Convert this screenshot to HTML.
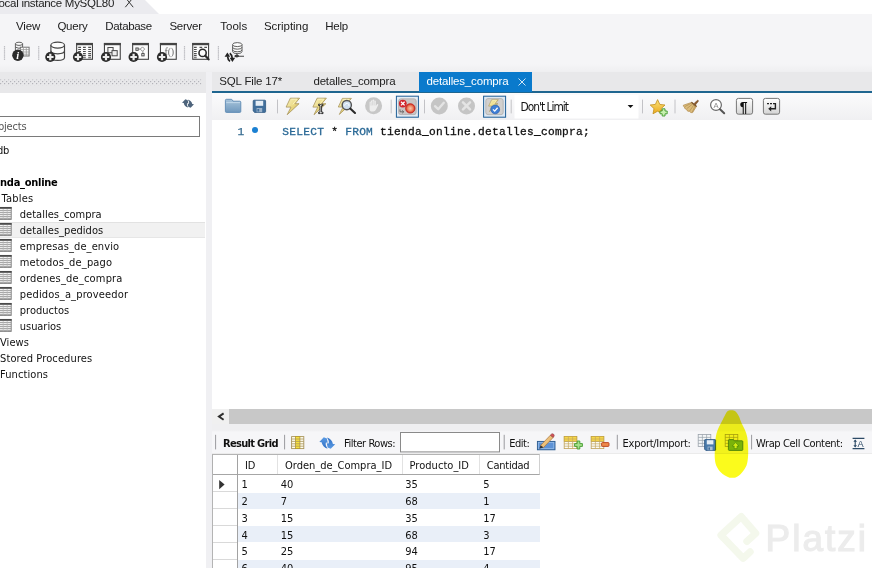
<!DOCTYPE html>
<html><head><meta charset="utf-8"><title>MySQL Workbench</title>
<style>
html,body{margin:0;padding:0;}
body{width:872px;height:568px;overflow:hidden;position:relative;background:#fff;font-family:"Liberation Sans",sans-serif;font-size:12px;color:#1a1a1a;}
.abs{position:absolute;}
.t{position:absolute;white-space:pre;line-height:1;}
.s{font-family:"Liberation Sans",sans-serif;}
.h{font-family:"DejaVu Sans Condensed","DejaVu Sans","Liberation Sans",sans-serif;}
.m{font-family:"Liberation Mono",monospace;}
svg{position:absolute;overflow:visible;}
</style></head><body>
<!-- top tab -->
<svg style="left:0;top:0" width="170" height="14"><polygon points="0,0 145,0 159,14 0,14" fill="#ebebef"/></svg>
<svg style="left:124.5px;top:-2.7px" width="9" height="11"><path d="M0.3 0.5 L8.2 10.2 M8.2 0.5 L0.3 10.2" stroke="#333" stroke-width="1" fill="none"/></svg>

<div class="abs" style="left:0;top:13.5px;width:872px;height:59px;background:linear-gradient(#f5f5f7 0,#f5f5f7 50px,#eeeef0 59px);"></div>
<div class="abs" style="left:0;top:72px;width:872px;height:21px;background:#e8e8ea;"></div>

<svg style="left:0;top:0" width="260" height="70" viewBox="0 0 260 70" fill="none"><rect x="3.9" y="46.3" width="1.2" height="1.1" fill="#a8a8ae"/><rect x="3.9" y="48.3" width="1.2" height="1.1" fill="#a8a8ae"/><rect x="3.9" y="50.4" width="1.2" height="1.1" fill="#a8a8ae"/><rect x="3.9" y="52.4" width="1.2" height="1.1" fill="#a8a8ae"/><rect x="3.9" y="54.5" width="1.2" height="1.1" fill="#a8a8ae"/><rect x="3.9" y="56.5" width="1.2" height="1.1" fill="#a8a8ae"/><rect x="3.9" y="58.6" width="1.2" height="1.1" fill="#a8a8ae"/><rect x="38.1" y="46.3" width="1.2" height="1.1" fill="#a8a8ae"/><rect x="38.1" y="48.3" width="1.2" height="1.1" fill="#a8a8ae"/><rect x="38.1" y="50.4" width="1.2" height="1.1" fill="#a8a8ae"/><rect x="38.1" y="52.4" width="1.2" height="1.1" fill="#a8a8ae"/><rect x="38.1" y="54.5" width="1.2" height="1.1" fill="#a8a8ae"/><rect x="38.1" y="56.5" width="1.2" height="1.1" fill="#a8a8ae"/><rect x="38.1" y="58.6" width="1.2" height="1.1" fill="#a8a8ae"/><rect x="183.9" y="46.3" width="1.2" height="1.1" fill="#a8a8ae"/><rect x="183.9" y="48.3" width="1.2" height="1.1" fill="#a8a8ae"/><rect x="183.9" y="50.4" width="1.2" height="1.1" fill="#a8a8ae"/><rect x="183.9" y="52.4" width="1.2" height="1.1" fill="#a8a8ae"/><rect x="183.9" y="54.5" width="1.2" height="1.1" fill="#a8a8ae"/><rect x="183.9" y="56.5" width="1.2" height="1.1" fill="#a8a8ae"/><rect x="183.9" y="58.6" width="1.2" height="1.1" fill="#a8a8ae"/><rect x="217.8" y="46.3" width="1.2" height="1.1" fill="#a8a8ae"/><rect x="217.8" y="48.3" width="1.2" height="1.1" fill="#a8a8ae"/><rect x="217.8" y="50.4" width="1.2" height="1.1" fill="#a8a8ae"/><rect x="217.8" y="52.4" width="1.2" height="1.1" fill="#a8a8ae"/><rect x="217.8" y="54.5" width="1.2" height="1.1" fill="#a8a8ae"/><rect x="217.8" y="56.5" width="1.2" height="1.1" fill="#a8a8ae"/><rect x="217.8" y="58.6" width="1.2" height="1.1" fill="#a8a8ae"/><g stroke="#5c5c5c" stroke-width="0.95"><ellipse cx="19" cy="43.8" rx="3.6" ry="1.6" fill="#fafafa"/><path d="M15.4 43.8V51M22.6 43.8V47.5M15.4 47.2Q19 49.4 22.6 47.2" /></g><rect x="20.3" y="47.2" width="8.8" height="8.8" fill="#fbfbfb" stroke="#6c6c6c" stroke-width="0.95"/><path d="M20.3 49.6H29M20.3 52H29M20.3 54.2H29M23.4 47.2V56M26.3 47.2V56" stroke="#9a9a9a" stroke-width="0.8"/><circle cx="17.9" cy="55.3" r="5.7" fill="#2b2b2b"/><text x="16.3" y="59" font-family="Liberation Serif,serif" font-style="italic" font-weight="700" font-size="10.5" fill="#fff">i</text><g stroke="#444" stroke-width="1.15"><path d="M50.9 45.1V57.4Q50.9 60.3 57.7 60.3Q64.5 60.3 64.5 57.4V45.1" fill="#fbfbfb"/><ellipse cx="57.7" cy="45.1" rx="6.8" ry="3" fill="#fdfdfd"/><path d="M50.9 50.8Q50.9 53.8 57.7 53.8Q64.5 53.8 64.5 50.8"/></g><circle cx="50.3" cy="57" r="5.1" fill="#2b2b2b"/><path d="M47.0 57H53.599999999999994M50.3 53.7V60.3" stroke="#ececec" stroke-width="2.2"/><rect x="76.64999999999999" y="43.6" width="15.8" height="15.7" fill="#fcfcfc" stroke="#444" stroke-width="1.1"/><rect x="76.1" y="42.9" width="16.9" height="2.3" fill="#444"/><path d="M78.2 47.40H81M83 47.40H85.8M88.2 47.40H91M78.2 49.46H81M83 49.46H85.8M88.2 49.46H91M78.2 51.52H81M83 51.52H85.8M88.2 51.52H91M78.2 53.58H81M83 53.58H85.8M88.2 53.58H91M78.2 55.64H81M83 55.64H85.8M88.2 55.64H91M78.2 57.70H81M83 57.70H85.8M88.2 57.70H91" stroke="#505050" stroke-width="1.1"/><circle cx="78" cy="57" r="5.1" fill="#2b2b2b"/><path d="M74.7 57H81.3M78 53.7V60.3" stroke="#ececec" stroke-width="2.2"/><rect x="104.45" y="43.6" width="15.8" height="15.7" fill="#fcfcfc" stroke="#444" stroke-width="1.1"/><rect x="103.9" y="42.9" width="16.9" height="2.3" fill="#444"/><rect x="107.9" y="47.5" width="5.2" height="5.2" fill="#f6f6f6" stroke="#4a4a4a" stroke-width="1"/><rect x="112" y="50.6" width="5.2" height="5.2" fill="#f0f0f0" stroke="#4a4a4a" stroke-width="1"/><circle cx="106" cy="57" r="5.1" fill="#2b2b2b"/><path d="M102.7 57H109.3M106 53.7V60.3" stroke="#ececec" stroke-width="2.2"/><rect x="132.65" y="43.6" width="15.8" height="15.7" fill="#fcfcfc" stroke="#444" stroke-width="1.1"/><rect x="132.1" y="42.9" width="16.9" height="2.3" fill="#444"/><rect x="135.9" y="48" width="2.3" height="2.3" stroke="#3a3a3a" stroke-width="0.9" fill="#fff"/><path d="M142.5 46.9L144.7 49.1L142.5 51.3L140.3 49.1Z" stroke="#777" stroke-width="0.8" fill="#fff"/><rect x="141.8" y="53.6" width="2.3" height="2.3" stroke="#3a3a3a" stroke-width="0.9" fill="#fff"/><path d="M138.6 49.1H140.3M142.9 51.3V53.2" stroke="#666" stroke-width="0.8"/><circle cx="133.6" cy="57" r="5.1" fill="#2b2b2b"/><path d="M130.29999999999998 57H136.9M133.6 53.7V60.3" stroke="#ececec" stroke-width="2.2"/><rect x="160.45000000000002" y="43.6" width="15.8" height="15.7" fill="#fcfcfc" stroke="#444" stroke-width="1.1"/><rect x="159.9" y="42.9" width="16.9" height="2.3" fill="#444"/><text x="164.6" y="55.4" font-family="Liberation Serif,serif" font-size="10" fill="#6a6a6a" letter-spacing="-0.2">f()</text><circle cx="162" cy="57" r="5.1" fill="#2b2b2b"/><path d="M158.7 57H165.3M162 53.7V60.3" stroke="#ececec" stroke-width="2.2"/><rect x="192.75" y="43.6" width="15.8" height="15.7" fill="#fcfcfc" stroke="#444" stroke-width="1.1"/><rect x="192.2" y="42.9" width="16.9" height="2.3" fill="#444"/><path d="M194 47.4H196.7M199.5 47.4H202.2M204.3 47.4H207M194 49.46H196.7M194 51.52H196.7M194 53.58H196.7M194 55.64H196.7M194 57.70H196.7" stroke="#505050" stroke-width="1.1"/><circle cx="202.6" cy="52.9" r="3.6" fill="#fcfcfc" stroke="#2b2b2b" stroke-width="1.6"/><path d="M205.4 55.7L208.6 59.4" stroke="#2b2b2b" stroke-width="2.2" stroke-linecap="round"/><g stroke="#5a5a5a" stroke-width="0.95"><path d="M232.6 44.6V51.6Q232.6 53.6 237.3 53.6Q242 53.6 242 51.6V44.6" fill="#fbfbfb"/><ellipse cx="237.3" cy="44.6" rx="4.7" ry="2" fill="#fdfdfd"/><path d="M232.6 47.2Q232.6 49.2 237.3 49.2Q242 49.2 242 47.2M232.6 49.8Q232.6 51.8 237.3 51.8Q242 51.8 242 49.8"/></g><path d="M237 53.6V56M234.5 56.2H244" stroke="#444" stroke-width="1.1"/><ellipse cx="236.8" cy="56.1" rx="2.2" ry="1.3" fill="#3a3a3a"/><path d="M227.4 52.6L224.6 56.8H230.2Z" fill="#222"/><path d="M227.6 56.4Q227.8 59.8 230 61.4" stroke="#222" stroke-width="1.7"/><path d="M232.4 62L229.6 57.8H235.2Z" fill="#222"/><path d="M232.2 58.2Q232 54.8 229.8 53.2" stroke="#222" stroke-width="1.7"/></svg>

<!-- sidebar -->
<div class="abs" style="left:0;top:93px;width:205.5px;height:475px;background:#fff;"></div>
<div class="abs" style="left:205.5px;top:72px;width:6.5px;height:496px;background:#f0f0f3;"></div>
<svg style="left:0;top:79px" width="202" height="7"><defs><pattern id="dots" x="0" y="0" width="4" height="4" patternUnits="userSpaceOnUse"><rect x="0" y="0" width="1.2" height="1.2" fill="#b4b4ba"/><rect x="2" y="2" width="1.2" height="1.2" fill="#b4b4ba"/></pattern></defs><rect x="0" y="0.5" width="201.5" height="5.6" fill="url(#dots)"/></svg>
<svg style="left:182.2px;top:98.9px" width="12" height="9" viewBox="0 0 11.7 8.2"><path id="crs" d="M3.3 0L0 3.3L1.7 3.5Q2.3 7 6.1 8.1Q4.1 5.6 4.9 3.8L6.2 3.9L5.6 0.9Z" fill="#4e647c"/><path d="M3.3 0L0 3.3L1.7 3.5Q2.3 7 6.1 8.1Q4.1 5.6 4.9 3.8L6.2 3.9L5.6 0.9Z" fill="#4e647c" transform="rotate(180 5.85 4.1)"/></svg>
<div class="abs" style="left:-2px;top:116px;width:201.8px;height:21px;border:1px solid #7a7a7a;background:#fff;box-sizing:border-box;"></div>
<div class="abs" style="left:0;top:222px;width:204.5px;height:15.5px;background:#f1f1f1;border-top:1px solid #e2e2e2;border-bottom:1px solid #e6e6e6;box-sizing:border-box;"></div>
<svg style="left:-1px;top:206.6px" width="13" height="13" viewBox="0 0 13 13"><rect x="0" y="0.4" width="12.2" height="12" fill="#f4f4f4" stroke="#7c7c7c" stroke-width="0.9"/><rect x="-0.4" y="0" width="13" height="1.8" fill="#4a4a4a"/><path d="M0 3.6H12.2M0 5.6H12.2M0 7.6H12.2M0 9.6H12.2M0 11.4H12.2" stroke="#969696" stroke-width="0.9"/><path d="M4.2 2V12.4M8.2 2V12.4" stroke="#b4b4b4" stroke-width="0.7"/></svg>
<svg style="left:-1px;top:222.6px" width="13" height="13" viewBox="0 0 13 13"><rect x="0" y="0.4" width="12.2" height="12" fill="#f4f4f4" stroke="#7c7c7c" stroke-width="0.9"/><rect x="-0.4" y="0" width="13" height="1.8" fill="#4a4a4a"/><path d="M0 3.6H12.2M0 5.6H12.2M0 7.6H12.2M0 9.6H12.2M0 11.4H12.2" stroke="#969696" stroke-width="0.9"/><path d="M4.2 2V12.4M8.2 2V12.4" stroke="#b4b4b4" stroke-width="0.7"/></svg>
<svg style="left:-1px;top:238.6px" width="13" height="13" viewBox="0 0 13 13"><rect x="0" y="0.4" width="12.2" height="12" fill="#f4f4f4" stroke="#7c7c7c" stroke-width="0.9"/><rect x="-0.4" y="0" width="13" height="1.8" fill="#4a4a4a"/><path d="M0 3.6H12.2M0 5.6H12.2M0 7.6H12.2M0 9.6H12.2M0 11.4H12.2" stroke="#969696" stroke-width="0.9"/><path d="M4.2 2V12.4M8.2 2V12.4" stroke="#b4b4b4" stroke-width="0.7"/></svg>
<svg style="left:-1px;top:254.6px" width="13" height="13" viewBox="0 0 13 13"><rect x="0" y="0.4" width="12.2" height="12" fill="#f4f4f4" stroke="#7c7c7c" stroke-width="0.9"/><rect x="-0.4" y="0" width="13" height="1.8" fill="#4a4a4a"/><path d="M0 3.6H12.2M0 5.6H12.2M0 7.6H12.2M0 9.6H12.2M0 11.4H12.2" stroke="#969696" stroke-width="0.9"/><path d="M4.2 2V12.4M8.2 2V12.4" stroke="#b4b4b4" stroke-width="0.7"/></svg>
<svg style="left:-1px;top:270.6px" width="13" height="13" viewBox="0 0 13 13"><rect x="0" y="0.4" width="12.2" height="12" fill="#f4f4f4" stroke="#7c7c7c" stroke-width="0.9"/><rect x="-0.4" y="0" width="13" height="1.8" fill="#4a4a4a"/><path d="M0 3.6H12.2M0 5.6H12.2M0 7.6H12.2M0 9.6H12.2M0 11.4H12.2" stroke="#969696" stroke-width="0.9"/><path d="M4.2 2V12.4M8.2 2V12.4" stroke="#b4b4b4" stroke-width="0.7"/></svg>
<svg style="left:-1px;top:286.6px" width="13" height="13" viewBox="0 0 13 13"><rect x="0" y="0.4" width="12.2" height="12" fill="#f4f4f4" stroke="#7c7c7c" stroke-width="0.9"/><rect x="-0.4" y="0" width="13" height="1.8" fill="#4a4a4a"/><path d="M0 3.6H12.2M0 5.6H12.2M0 7.6H12.2M0 9.6H12.2M0 11.4H12.2" stroke="#969696" stroke-width="0.9"/><path d="M4.2 2V12.4M8.2 2V12.4" stroke="#b4b4b4" stroke-width="0.7"/></svg>
<svg style="left:-1px;top:302.6px" width="13" height="13" viewBox="0 0 13 13"><rect x="0" y="0.4" width="12.2" height="12" fill="#f4f4f4" stroke="#7c7c7c" stroke-width="0.9"/><rect x="-0.4" y="0" width="13" height="1.8" fill="#4a4a4a"/><path d="M0 3.6H12.2M0 5.6H12.2M0 7.6H12.2M0 9.6H12.2M0 11.4H12.2" stroke="#969696" stroke-width="0.9"/><path d="M4.2 2V12.4M8.2 2V12.4" stroke="#b4b4b4" stroke-width="0.7"/></svg>
<svg style="left:-1px;top:318.6px" width="13" height="13" viewBox="0 0 13 13"><rect x="0" y="0.4" width="12.2" height="12" fill="#f4f4f4" stroke="#7c7c7c" stroke-width="0.9"/><rect x="-0.4" y="0" width="13" height="1.8" fill="#4a4a4a"/><path d="M0 3.6H12.2M0 5.6H12.2M0 7.6H12.2M0 9.6H12.2M0 11.4H12.2" stroke="#969696" stroke-width="0.9"/><path d="M4.2 2V12.4M8.2 2V12.4" stroke="#b4b4b4" stroke-width="0.7"/></svg>

<!-- editor tabs -->
<div class="abs" style="left:212px;top:91.3px;width:660px;height:1.9px;background:#1f6690;"></div>
<div class="abs" style="left:419px;top:72.3px;width:112.7px;height:19.6px;background:#0a7acc;"></div>
<svg style="left:517.5px;top:77.5px" width="8" height="8"><path d="M0.5 0.5 L7.5 7.5 M7.5 0.5 L0.5 7.5" stroke="#cfe6f7" stroke-width="1" fill="none"/></svg>

<!-- editor toolbar -->
<div class="abs" style="left:212px;top:93.2px;width:660px;height:27px;background:linear-gradient(#fbfbfc,#f0f0f2);"></div>
<svg style="left:0;top:0" width="872" height="125" viewBox="0 0 872 125" fill="none"><defs><linearGradient id="gb" x1="0" y1="0" x2="1" y2="1"><stop offset="0" stop-color="#faf4c4"/><stop offset="0.5" stop-color="#ead882"/><stop offset="1" stop-color="#c4a84e"/></linearGradient><linearGradient id="gf" x1="0" y1="0" x2="0" y2="1"><stop offset="0" stop-color="#a9c5dc"/><stop offset="1" stop-color="#6f98bd"/></linearGradient><linearGradient id="gbtn" x1="0" y1="0" x2="0" y2="1"><stop offset="0" stop-color="#ffffff"/><stop offset="1" stop-color="#d4d4d4"/></linearGradient><linearGradient id="gstar" x1="0" y1="0" x2="0" y2="1"><stop offset="0" stop-color="#fbe27a"/><stop offset="1" stop-color="#e9a91c"/></linearGradient><radialGradient id="gred" cx="0.5" cy="0.5" r="0.5"><stop offset="0" stop-color="#f8c8b0"/><stop offset="0.55" stop-color="#ee8a66"/><stop offset="1" stop-color="#d4281c"/></radialGradient></defs><rect x="514.5" y="95" width="124" height="23.5" fill="#fff"/><path d="M225.4 100.3Q225.4 99.3 226.4 99.3H231.2Q232 99.3 232.4 100L233 101.2H239.8Q240.8 101.2 240.8 102.2V111.4Q240.8 112.4 239.8 112.4H226.4Q225.4 112.4 225.4 111.4Z" fill="url(#gf)" stroke="#5d8ab3" stroke-width="0.9"/><path d="M226.2 102.6H240" stroke="#c4daec" stroke-width="0.9"/><path d="M253.2 101Q253.2 100.2 254 100.2H264.8Q265.6 100.2 265.6 101V111.6Q265.6 112.4 264.8 112.4H254.6L253.2 111Z" fill="#416f9c" stroke="#2f5880" stroke-width="0.8"/><rect x="255.6" y="100.8" width="7.6" height="5" fill="#e6eef6"/><rect x="256.6" y="108" width="5.6" height="4.2" fill="#9db4cb"/><rect x="257.4" y="109" width="1.8" height="2.6" fill="#416f9c"/><path d="M277.5 99.6V113.4" stroke="#c2c2c6" stroke-width="1"/><g transform="translate(285.8 97.8) scale(1)"><path d="M4.5 0.4H13.8L9.2 5.9H13.3L1.4 16.9L5.2 9.3H0.3Z" fill="url(#gb)" stroke="#a8945a" stroke-width="0.8" stroke-linejoin="round"/><path d="M5.6 1.4H11.2L7 6.6" stroke="#fdf6c8" stroke-width="0.9" fill="none" opacity="0.9"/></g><g transform="translate(312.6 97.8) scale(1)"><path d="M4.5 0.4H13.8L9.2 5.9H13.3L1.4 16.9L5.2 9.3H0.3Z" fill="url(#gb)" stroke="#a8945a" stroke-width="0.8" stroke-linejoin="round"/><path d="M5.6 1.4H11.2L7 6.6" stroke="#fdf6c8" stroke-width="0.9" fill="none" opacity="0.9"/></g><path d="M318.6 104.2H320.2L320.8 104.8L321.4 104.2H323V105.6H321.6V112.2H323V113.6H321.4L320.8 113L320.2 113.6H318.6V112.2H320V105.6H318.6Z" fill="#fff" stroke="#1a1a1a" stroke-width="0.9"/><g transform="translate(338 98) scale(0.97)"><path d="M4.5 0.4H13.8L9.2 5.9H13.3L1.4 16.9L5.2 9.3H0.3Z" fill="url(#gb)" stroke="#a8945a" stroke-width="0.8" stroke-linejoin="round"/><path d="M5.6 1.4H11.2L7 6.6" stroke="#fdf6c8" stroke-width="0.9" fill="none" opacity="0.9"/></g><circle cx="346.8" cy="105.1" r="4.6" fill="#cfdfee" stroke="#555" stroke-width="1.4"/><path d="M344.4 105.6Q345.4 103 347.4 103.4Q349.4 103.8 349 106" stroke="#fff" stroke-width="1" fill="none" opacity="0.85"/><path d="M350.2 108.6L355 113" stroke="#2a2a2a" stroke-width="2.1" stroke-linecap="round"/><circle cx="373.6" cy="105.8" r="8.5" fill="#c7c7c7"/><path d="M369.6 106.2V102.4Q369.6 101.6 370.3 101.6Q371 101.6 371 102.4V101Q371 100.2 371.8 100.2Q372.6 100.2 372.6 101V100.4Q372.6 99.6 373.4 99.6Q374.2 99.6 374.2 100.4V101.2Q374.2 100.5 375 100.5Q375.8 100.5 375.8 101.2V106L376.8 104.4Q377.4 103.6 378 104.1Q378.5 104.6 378 105.4L376 109.6Q375.2 111.6 373.2 111.6H372.2Q369.6 111.6 369.6 109Z" fill="#ededed"/><path d="M371 102.4V105.6M372.6 101V105.4M374.2 101.2V105.4" stroke="#c7c7c7" stroke-width="0.5"/><path d="M391.2 99.6V113.4" stroke="#c2c2c6" stroke-width="1"/><rect x="396.4" y="96.2" width="22" height="21" fill="#e4edf6" stroke="#1f5f96" stroke-width="1"/><rect x="398.6" y="98.8" width="17.6" height="15.8" rx="2.2" fill="#c9c5c5" stroke="#a8a4a4" stroke-width="0.7"/><path d="M400 109.4V111.8H403.4M402.2 110.4L403.8 111.8L402.2 113.2" stroke="#555" stroke-width="0.8"/><circle cx="402.8" cy="103.6" r="3.9" fill="#d2242c"/><path d="M401 101.8L404.6 105.4M404.6 101.8L401 105.4" stroke="#fff" stroke-width="1.3"/><circle cx="410.3" cy="108.4" r="4.7" fill="url(#gred)" stroke="#c22018" stroke-width="0.8"/><path d="M424.5 99.6V113.4" stroke="#c2c2c6" stroke-width="1"/><circle cx="439.3" cy="105.9" r="8.5" fill="#c5c5c5"/><path d="M435 106.2L438.2 109.2L443.8 102.8" stroke="#e4e4e4" stroke-width="2.4" fill="none" stroke-linecap="round" stroke-linejoin="round"/><circle cx="466.5" cy="105.9" r="8.5" fill="#c5c5c5"/><path d="M463 102.4L470 109.4M470 102.4L463 109.4" stroke="#e4e4e4" stroke-width="2.5" fill="none" stroke-linecap="round"/><rect x="483.6" y="96.2" width="22" height="21" fill="#dde8f3" stroke="#1f5f96" stroke-width="1"/><rect x="485.8" y="98.6" width="17.4" height="16" rx="2.2" fill="#d2d0ce" stroke="#a9a7a5" stroke-width="0.7"/><g transform="translate(488.4 99.4) scale(0.72)"><path d="M4.5 0.4H13.8L9.2 5.9H13.3L1.4 16.9L5.2 9.3H0.3Z" fill="url(#gb)" stroke="#a8945a" stroke-width="0.8" stroke-linejoin="round"/><path d="M5.6 1.4H11.2L7 6.6" stroke="#fdf6c8" stroke-width="0.9" fill="none" opacity="0.9"/></g><circle cx="495.2" cy="109.4" r="4.4" fill="#3f7fd6" stroke="#2a5fb0" stroke-width="0.7"/><path d="M493 109.4L494.7 111.1L497.6 107.8" stroke="#fff" stroke-width="1.3" fill="none"/><path d="M511.2 99.6V113.4" stroke="#c2c2c6" stroke-width="1"/><path d="M627.6 105H633.4L630.5 108Z" fill="#111"/><path d="M642.5 99.6V113.4" stroke="#c2c2c6" stroke-width="1"/><path d="M657.6 99.6L659.8 104.4L665 105L661.2 108.6L662.2 113.8L657.6 111.2L653 113.8L654 108.6L650.2 105L655.4 104.4Z" fill="url(#gstar)" stroke="#c28e1c" stroke-width="0.8" stroke-linejoin="round"/><path d="M662.2 108.8H665V111H667.2V113.8H665V116H662.2V113.8H660V111H662.2Z" fill="#c8f0b0" stroke="#3f9a2c" stroke-width="0.9"/><path d="M675 99.6V113.4" stroke="#c2c2c6" stroke-width="1"/><path d="M694 103.6L697.2 100.4Q698 99.8 698.4 100.6Q698.6 101.2 698 101.8L695.4 105Z" fill="#8a5a2c" stroke="#6e4420" stroke-width="0.5"/><path d="M691.6 102.4L696.4 106.4L692.6 112.6Q690.8 113.2 689.6 111.4Q687 111.8 686.6 109.4Q684.2 109 684.4 106.8Q682.8 106.4 683.4 105.2Z" fill="#dcbc7c" stroke="#b08a4a" stroke-width="0.7" stroke-linejoin="round"/><path d="M692.6 104L686.8 108.6M693.8 105L689.6 111M691.4 103.2L684.8 106.6M695 105.8L692.4 112" stroke="#a88448" stroke-width="0.6"/><path d="M691.4 102.2L696.6 106.6" stroke="#7a5228" stroke-width="1.3"/><circle cx="716" cy="105" r="5.4" fill="#fff" stroke="#6a6a6a" stroke-width="1.2"/><text x="713.4" y="107.9" font-family="Liberation Sans,sans-serif" font-size="7.6" fill="#8a8a8a">A</text><path d="M720 109.2L724.2 113.2" stroke="#555" stroke-width="2" stroke-linecap="round"/><rect x="736.4" y="98.4" width="16.2" height="15.8" rx="2" fill="url(#gbtn)" stroke="#777" stroke-width="1"/><text x="739.8" y="111.6" font-family="Liberation Sans,sans-serif" font-weight="700" font-size="14" fill="#111">¶</text><rect x="763.4" y="98.4" width="16.2" height="15.8" rx="2" fill="url(#gbtn)" stroke="#777" stroke-width="1"/><path d="M767 103.6H769M770 103.6H772M773 103.6H775.4V108.8H770" stroke="#222" stroke-width="1.4"/><path d="M771.2 106.2L768.2 108.8L771.2 111.4Z" fill="#222"/></svg>

<!-- editor -->
<div class="abs" style="left:212px;top:120px;width:660px;height:289px;background:#fff;"></div>
<div class="t m" style="left:237.4px;top:127.1px;font-size:11.2px;color:#356b90;-webkit-text-stroke:0.25px;">1</div>
<div class="abs" style="left:251.8px;top:126.5px;width:6.4px;height:6.4px;border-radius:50%;background:#1b80d2;"></div>
<div class="t m" style="left:282.2px;top:127.1px;font-size:11.2px;letter-spacing:0.279px;color:#111;-webkit-text-stroke:0.3px;"><span style="color:#2a6996">SELECT</span> * <span style="color:#2a6996">FROM</span> tienda_online.detalles_compra;</div>

<!-- hscroll -->
<div class="abs" style="left:212px;top:409px;width:660px;height:15px;background:#c8c8c8;"></div>
<div class="abs" style="left:212px;top:409px;width:17px;height:15px;background:#f0f0f0;"></div>
<svg style="left:216.6px;top:412px" width="8" height="9"><path d="M6.6 1.4 L1.9 4.6 L6.6 7.8" stroke="#2e2e2e" stroke-width="1.9" fill="none"/></svg>
<div class="abs" style="left:212px;top:424px;width:660px;height:30.2px;background:linear-gradient(#efeff1 0,#efeff1 6px,#f6f6f8 8px,#f6f6f8 100%);"></div>
<svg style="left:0;top:0" width="872" height="460" viewBox="0 0 872 460" fill="none"><defs><linearGradient id="gref" x1="0" y1="0" x2="0" y2="1"><stop offset="0" stop-color="#5a9be4"/><stop offset="1" stop-color="#2f6fc4"/></linearGradient></defs><rect x="212" y="453.4" width="660" height="0.9" fill="#e3e3e3"/><path d="M215.6 434.8V449.4" stroke="#9a9a9e" stroke-width="1"/><path d="M284.6 434.8V449.4" stroke="#9a9a9e" stroke-width="1"/><path d="M504.2 434.8V449.4" stroke="#9a9a9e" stroke-width="1"/><path d="M617.3 434.8V449.4" stroke="#9a9a9e" stroke-width="1"/><path d="M751.6 434.8V449.4" stroke="#9a9a9e" stroke-width="1"/><rect x="400.5" y="432.5" width="99" height="19.4" fill="#fff" stroke="#8a8a8a" stroke-width="1"/><rect x="291.6" y="436.6" width="12.2" height="12" fill="#fffdf0" stroke="#a8945a" stroke-width="0.9"/><rect x="295.5" y="436.6" width="4.4" height="12" fill="#f8e23c" stroke="#b09630" stroke-width="0.8"/><path d="M291.6 439H303.8M291.6 441.4H303.8M291.6 443.8H303.8M291.6 446.2H303.8" stroke="#a8945a" stroke-width="0.8"/><g transform="translate(319.3 437.3) scale(1.36 1.4)"><path d="M3.3 0L0 3.3L1.7 3.5Q2.3 7 6.1 8.1Q4.1 5.6 4.9 3.8L6.2 3.9L5.6 0.9Z" fill="url(#gref)"/><path d="M3.3 0L0 3.3L1.7 3.5Q2.3 7 6.1 8.1Q4.1 5.6 4.9 3.8L6.2 3.9L5.6 0.9Z" fill="url(#gref)" transform="rotate(180 5.85 4.1)"/></g><rect x="537.4" y="441.4" width="17.6" height="8.4" fill="#5d92d6" stroke="#2a5a8e" stroke-width="0.9"/><rect x="538.6" y="442.6" width="15.2" height="6" fill="none" stroke="#9cc0ea" stroke-width="0.7"/><path d="M550.4 435.2L553.2 437.4L543.4 447.6L540.6 445.4Z" fill="#ecc07a" stroke="#a8743a" stroke-width="0.7"/><path d="M550.4 435.2L551.6 434Q552.6 433.4 553.6 434.2Q554.6 435.2 554 436.2L553.2 437.4Z" fill="#d4545a" stroke="#8a3a3a" stroke-width="0.6"/><path d="M540.6 445.4L543.4 447.6L539.2 448.8Z" fill="#333"/><rect x="564.2" y="436.6" width="12.6" height="12" fill="#fbfbf6" stroke="#c0a25a" stroke-width="0.8"/><rect x="564.2" y="436.6" width="12.6" height="4.8" fill="#f7d848" stroke="#c0a040" stroke-width="0.7"/><path d="M564.2 439H576.8000000000001M564.2 441.4H576.8000000000001M564.2 443.8H576.8000000000001M564.2 446.2H576.8000000000001M568.4000000000001 436.6V448.6M572.6 436.6V448.6" stroke="#c4a860" stroke-width="0.7"/><path d="M577.2 441H579.8V443.6H582.4V446.4H579.8V449H577.2V446.4H574.6V443.6H577.2Z" fill="#a6e08a" stroke="#3f9a2c" stroke-width="0.9"/><rect x="591.2" y="436.6" width="12.6" height="12" fill="#fbfbf6" stroke="#c0a25a" stroke-width="0.8"/><rect x="591.2" y="436.6" width="12.6" height="4.8" fill="#f7d848" stroke="#c0a040" stroke-width="0.7"/><path d="M591.2 439H603.8000000000001M591.2 441.4H603.8000000000001M591.2 443.8H603.8000000000001M591.2 446.2H603.8000000000001M595.4000000000001 436.6V448.6M599.6 436.6V448.6" stroke="#c4a860" stroke-width="0.7"/><rect x="601.6" y="442.6" width="7.4" height="3.8" rx="0.8" fill="#ee8a4a" stroke="#b8401c" stroke-width="0.9"/><rect x="698.2" y="434.4" width="12.6" height="12" fill="#f4f6f8" stroke="#9aa2aa" stroke-width="0.8"/><path d="M698.2 437.4H710.8000000000001M698.2 440.4H710.8000000000001M698.2 443.4H710.8000000000001M702.4000000000001 434.4V446.4M706.6 434.4V446.4" stroke="#9aa2aa" stroke-width="0.7"/><path d="M704.6 440.2Q704.6 439.6 705.2 439.6H715Q715.6 439.6 715.6 440.2V449.8Q715.6 450.4 715 450.4H705.8L704.6 449.2Z" fill="#4a7bab" stroke="#2b5480" stroke-width="0.8"/><rect x="706.8" y="440.2" width="6.6" height="4.2" fill="#e6eef6"/><rect x="707.6" y="446.6" width="5" height="3.6" fill="#a9bfd4"/><rect x="708.4" y="447.4" width="1.6" height="2.4" fill="#3f6d9b"/><rect x="725.2" y="434.4" width="12.6" height="12" fill="#f8f4dc" stroke="#a8a070" stroke-width="0.8"/><path d="M725.2 437.4H737.8000000000001M725.2 440.4H737.8000000000001M725.2 443.4H737.8000000000001M729.4000000000001 434.4V446.4M733.6 434.4V446.4" stroke="#a8a070" stroke-width="0.7"/><path d="M728.4 440.4Q728.4 439.6 729.2 439.6H733Q733.6 439.6 734 440.2L734.4 440.8H742Q742.8 440.8 742.8 441.6V449.6Q742.8 450.4 742 450.4H729.2Q728.4 450.4 728.4 449.6Z" fill="#7cb65a" stroke="#3f7a26" stroke-width="0.8"/><path d="M735.6 442.6L739 446H737V448.6H734.2V446H732.2Z" fill="#d4f0b4" stroke="#3f7a26" stroke-width="0.5"/><path d="M852.6 438.4H864.4M852.6 448.6H864.4" stroke="#2c4a66" stroke-width="1.1"/><path d="M855.2 440.6V446.4" stroke="#2c4a66" stroke-width="1.1"/><path d="M853.4 441.8L855.2 439.6L857 441.8ZM853.4 445.2L855.2 447.4L857 445.2Z" fill="#2c4a66"/><text x="857.6" y="447.3" font-family="Liberation Sans,sans-serif" font-size="9.2" fill="#2c4a66">A</text></svg>

<!-- result grid -->
<div class="abs" style="left:212px;top:454.2px;width:660px;height:114px;background:#fff;"></div>
<div class="abs" style="left:212px;top:453.8px;width:327.8px;height:20.8px;background:#fff;border:1px solid #d0d0d0;border-top-color:#b4b4b4;border-left-color:#b0b0b0;border-bottom-color:#a6a6a6;box-sizing:border-box;"></div>
<div class="abs" style="left:276.9px;top:455px;width:1px;height:18.8px;background:#e2e2e2;"></div>
<div class="abs" style="left:402.1px;top:455px;width:1px;height:18.8px;background:#e2e2e2;"></div>
<div class="abs" style="left:478.5px;top:455px;width:1px;height:18.8px;background:#e2e2e2;"></div>
<div class="abs" style="left:238px;top:492.6px;width:301.5px;height:16px;background:#e9eff8;"></div>
<div class="abs" style="left:238px;top:526.3px;width:301.5px;height:16px;background:#e9eff8;"></div>
<div class="abs" style="left:238px;top:559.8px;width:301.5px;height:16px;background:#e9eff8;"></div>
<div class="abs" style="left:212px;top:474px;width:1px;height:94px;background:#b4b4b4;"></div>
<div class="abs" style="left:237px;top:454.6px;width:1px;height:114px;background:#a2a2a2;"></div>
<div class="abs" style="left:213px;top:491.1px;width:24px;height:1px;background:#d9d9d9;"></div>
<div class="abs" style="left:213px;top:508.0px;width:24px;height:1px;background:#d9d9d9;"></div>
<div class="abs" style="left:213px;top:524.9px;width:24px;height:1px;background:#d9d9d9;"></div>
<div class="abs" style="left:213px;top:541.9px;width:24px;height:1px;background:#d9d9d9;"></div>
<div class="abs" style="left:213px;top:558.8px;width:24px;height:1px;background:#d9d9d9;"></div>
<svg style="left:218.8px;top:480.2px" width="6" height="10"><path d="M0.2 0 L5.6 4.6 L0.2 9.2 Z" fill="#333"/></svg>

<div class="t s" style="left:-1.5px;top:-1.53px;font-size:11.5px;color:#222;letter-spacing:-0.283px;">ocal instance MySQL80</div>
<div class="t s" style="left:16.0px;top:20.97px;font-size:11.5px;color:#1b1b1b;letter-spacing:-0.130px;">View</div>
<div class="t s" style="left:57.4px;top:20.97px;font-size:11.5px;color:#1b1b1b;letter-spacing:-0.246px;">Query</div>
<div class="t s" style="left:105.3px;top:20.97px;font-size:11.5px;color:#1b1b1b;letter-spacing:-0.342px;">Database</div>
<div class="t s" style="left:169.4px;top:20.97px;font-size:11.5px;color:#1b1b1b;letter-spacing:-0.246px;">Server</div>
<div class="t s" style="left:220.2px;top:20.97px;font-size:11.5px;color:#1b1b1b;letter-spacing:0.028px;">Tools</div>
<div class="t s" style="left:264.0px;top:20.97px;font-size:11.5px;color:#1b1b1b;letter-spacing:-0.050px;">Scripting</div>
<div class="t s" style="left:325.2px;top:20.97px;font-size:11.5px;color:#1b1b1b;letter-spacing:-0.214px;">Help</div>
<div class="t s" style="left:219.2px;top:75.97px;font-size:11.5px;color:#222;letter-spacing:-0.148px;">SQL File 17*</div>
<div class="t s" style="left:313.4px;top:75.97px;font-size:11.5px;color:#222;letter-spacing:-0.159px;">detalles_compra</div>
<div class="t s" style="left:426.5px;top:75.97px;font-size:11.5px;color:#fff;letter-spacing:-0.159px;">detalles_compra</div>
<div class="t h" style="left:520.5px;top:101.72px;font-size:11.8px;color:#111;letter-spacing:-0.969px;">Don't Limit</div>
<div class="t h" style="left:-8.0px;top:120.89px;font-size:11px;color:#555;letter-spacing:-0.165px;">objects</div>
<div class="t h" style="left:-3.0px;top:144.89px;font-size:11px;color:#111;letter-spacing:-0.289px;">db</div>
<div class="t h" style="left:-14.0px;top:176.89px;font-size:11px;color:#000;letter-spacing:-0.268px;font-weight:700;">tienda_online</div>
<div class="t h" style="left:1.5px;top:192.89px;font-size:11px;color:#111;letter-spacing:0.204px;">Tables</div>
<div class="t h" style="left:19.8px;top:208.89px;font-size:11px;color:#111;letter-spacing:0.023px;">detalles_compra</div>
<div class="t h" style="left:19.8px;top:224.89px;font-size:11px;color:#111;letter-spacing:0.030px;">detalles_pedidos</div>
<div class="t h" style="left:19.8px;top:240.89px;font-size:11px;color:#111;letter-spacing:0.105px;">empresas_de_envio</div>
<div class="t h" style="left:19.8px;top:256.89px;font-size:11px;color:#111;letter-spacing:0.152px;">metodos_de_pago</div>
<div class="t h" style="left:19.8px;top:272.89px;font-size:11px;color:#111;letter-spacing:0.186px;">ordenes_de_compra</div>
<div class="t h" style="left:19.8px;top:288.89px;font-size:11px;color:#111;letter-spacing:0.154px;">pedidos_a_proveedor</div>
<div class="t h" style="left:19.8px;top:304.89px;font-size:11px;color:#111;letter-spacing:0.017px;">productos</div>
<div class="t h" style="left:19.8px;top:320.89px;font-size:11px;color:#111;letter-spacing:-0.050px;">usuarios</div>
<div class="t h" style="left:0.0px;top:336.89px;font-size:11px;color:#111;letter-spacing:0.075px;">Views</div>
<div class="t h" style="left:0.0px;top:352.89px;font-size:11px;color:#111;letter-spacing:0.113px;">Stored Procedures</div>
<div class="t h" style="left:0.0px;top:368.89px;font-size:11px;color:#111;letter-spacing:0.089px;">Functions</div>
<div class="t h" style="left:223.0px;top:438.39px;font-size:11px;color:#111;letter-spacing:-0.684px;font-weight:700;">Result Grid</div>
<div class="t h" style="left:344.0px;top:438.39px;font-size:11px;color:#111;letter-spacing:-0.449px;">Filter Rows:</div>
<div class="t h" style="left:509.2px;top:438.39px;font-size:11px;color:#111;letter-spacing:-0.460px;">Edit:</div>
<div class="t h" style="left:622.6px;top:438.39px;font-size:11px;color:#111;letter-spacing:-0.279px;">Export/Import:</div>
<div class="t h" style="left:756.0px;top:438.39px;font-size:11px;color:#111;letter-spacing:-0.356px;">Wrap Cell Content:</div>
<div class="t h" style="left:244.9px;top:460.39px;font-size:11px;color:#111;letter-spacing:-0.023px;">ID</div>
<div class="t h" style="left:285.0px;top:460.39px;font-size:11px;color:#111;letter-spacing:-0.005px;">Orden_de_Compra_ID</div>
<div class="t h" style="left:409.5px;top:460.39px;font-size:11px;color:#111;letter-spacing:0.038px;">Producto_ID</div>
<div class="t h" style="left:486.8px;top:460.39px;font-size:11px;color:#111;letter-spacing:-0.239px;">Cantidad</div>
<div class="t h" style="left:241.6px;top:478.79px;font-size:11px;color:#111;">1</div>
<div class="t h" style="left:280.8px;top:478.79px;font-size:11px;color:#111;">40</div>
<div class="t h" style="left:405.2px;top:478.79px;font-size:11px;color:#111;">35</div>
<div class="t h" style="left:483.2px;top:478.79px;font-size:11px;color:#111;">5</div>
<div class="t h" style="left:241.6px;top:495.71px;font-size:11px;color:#111;">2</div>
<div class="t h" style="left:280.8px;top:495.71px;font-size:11px;color:#111;">7</div>
<div class="t h" style="left:405.2px;top:495.71px;font-size:11px;color:#111;">68</div>
<div class="t h" style="left:483.2px;top:495.71px;font-size:11px;color:#111;">1</div>
<div class="t h" style="left:241.6px;top:512.63px;font-size:11px;color:#111;">3</div>
<div class="t h" style="left:280.8px;top:512.63px;font-size:11px;color:#111;">15</div>
<div class="t h" style="left:405.2px;top:512.63px;font-size:11px;color:#111;">35</div>
<div class="t h" style="left:483.2px;top:512.63px;font-size:11px;color:#111;">17</div>
<div class="t h" style="left:241.6px;top:529.55px;font-size:11px;color:#111;">4</div>
<div class="t h" style="left:280.8px;top:529.55px;font-size:11px;color:#111;">15</div>
<div class="t h" style="left:405.2px;top:529.55px;font-size:11px;color:#111;">68</div>
<div class="t h" style="left:483.2px;top:529.55px;font-size:11px;color:#111;">3</div>
<div class="t h" style="left:241.6px;top:546.47px;font-size:11px;color:#111;">5</div>
<div class="t h" style="left:280.8px;top:546.47px;font-size:11px;color:#111;">25</div>
<div class="t h" style="left:405.2px;top:546.47px;font-size:11px;color:#111;">94</div>
<div class="t h" style="left:483.2px;top:546.47px;font-size:11px;color:#111;">17</div>
<div class="t h" style="left:241.6px;top:563.39px;font-size:11px;color:#111;">6</div>
<div class="t h" style="left:280.8px;top:563.39px;font-size:11px;color:#111;">40</div>
<div class="t h" style="left:405.2px;top:563.39px;font-size:11px;color:#111;">95</div>
<div class="t h" style="left:483.2px;top:563.39px;font-size:11px;color:#111;">4</div>

<svg style="left:0;top:0" width="872" height="568" viewBox="0 0 872 568"><path d="M746.9 541.4L755.7 533.3L741.2 516.6L721 535.2L743.1 558.3L750.1 551.9" fill="none" stroke="#f4f8ec" stroke-width="7.2" stroke-linejoin="round" stroke-linecap="round"/></svg>
<div class="t s" style="left:765.6px;top:520.1px;font-size:37px;font-weight:400;color:#ececec;letter-spacing:2px;-webkit-text-stroke:1.2px #ececec;">Platzi</div>
<svg style="left:0;top:0;mix-blend-mode:multiply" width="872" height="568" viewBox="0 0 872 568"><path d="M731.3 410.3C732.6 410.3 734.0 410.2 735.2 411.2C736.4 412.1 737.7 414.0 738.7 416.0C739.8 418.0 740.5 420.7 741.5 423.0C742.5 425.3 744.0 427.7 745.0 430.0C746.0 432.3 746.7 434.7 747.2 437.0C747.7 439.3 747.7 441.6 747.9 444.0C748.1 446.4 748.2 448.9 748.2 451.3C748.2 453.7 748.2 456.0 747.9 458.3C747.6 460.6 747.5 463.0 746.5 465.4C745.5 467.8 743.6 470.5 742.0 472.4C740.4 474.3 738.3 476.1 736.6 477.0C734.9 477.9 733.4 477.8 732.0 477.8C730.6 477.8 729.8 477.9 728.0 477.0C726.2 476.1 723.0 474.3 721.0 472.4C719.0 470.5 717.2 467.8 716.2 465.4C715.2 463.0 715.0 460.6 714.8 458.3C714.6 456.0 714.7 453.7 714.8 451.3C714.9 448.9 715.0 446.4 715.2 444.0C715.4 441.6 715.4 439.3 715.8 437.0C716.2 434.7 716.7 432.3 717.6 430.0C718.5 427.7 719.8 425.3 721.0 423.0C722.2 420.7 723.5 418.0 724.6 416.0C725.7 414.0 726.4 412.1 727.5 411.2C728.6 410.2 730.0 410.3 731.3 410.3Z" fill="#fbfb1c"/></svg>
</body></html>
